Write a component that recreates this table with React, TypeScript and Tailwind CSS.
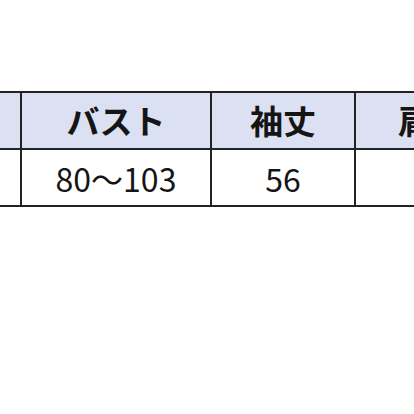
export default function App() {
  const headers = ['', 'バスト', '袖丈', '肩幅']
  const values = ['', '80〜103', '56', '38']
  const widths = ['w-[22px]', 'w-[190px]', 'w-[144px]', 'w-[150px]']

  return (
    <div
      className="w-[414px] h-[414px] overflow-hidden bg-white text-[#151515]"
      style={{ fontFamily: '"Noto Sans CJK JP", "Noto Sans", sans-serif' }}
    >
      <div className="mt-[91px] w-[600px] border-t-2 border-b-2 border-[#222]">
        {/* header row */}
        <div className="flex h-[57px] border-b-2 border-[#222] bg-[#dbe0f2]">
          {headers.map((h, i) => (
            <div
              key={i}
              className={`${widths[i]} shrink-0 flex items-center justify-center ${i < 3 ? 'border-r-2 border-[#222]' : ''} text-[33px] font-bold leading-none`}
            >
              {h}
            </div>
          ))}
        </div>
        {/* value row */}
        <div className="flex h-[55px]">
          {values.map((v, i) => (
            <div
              key={i}
              className={`${widths[i]} shrink-0 flex items-center justify-center ${i < 3 ? 'border-r-2 border-[#222]' : ''} text-[32px] leading-none`}
            >
              {v}
            </div>
          ))}
        </div>
      </div>
    </div>
  )
}
